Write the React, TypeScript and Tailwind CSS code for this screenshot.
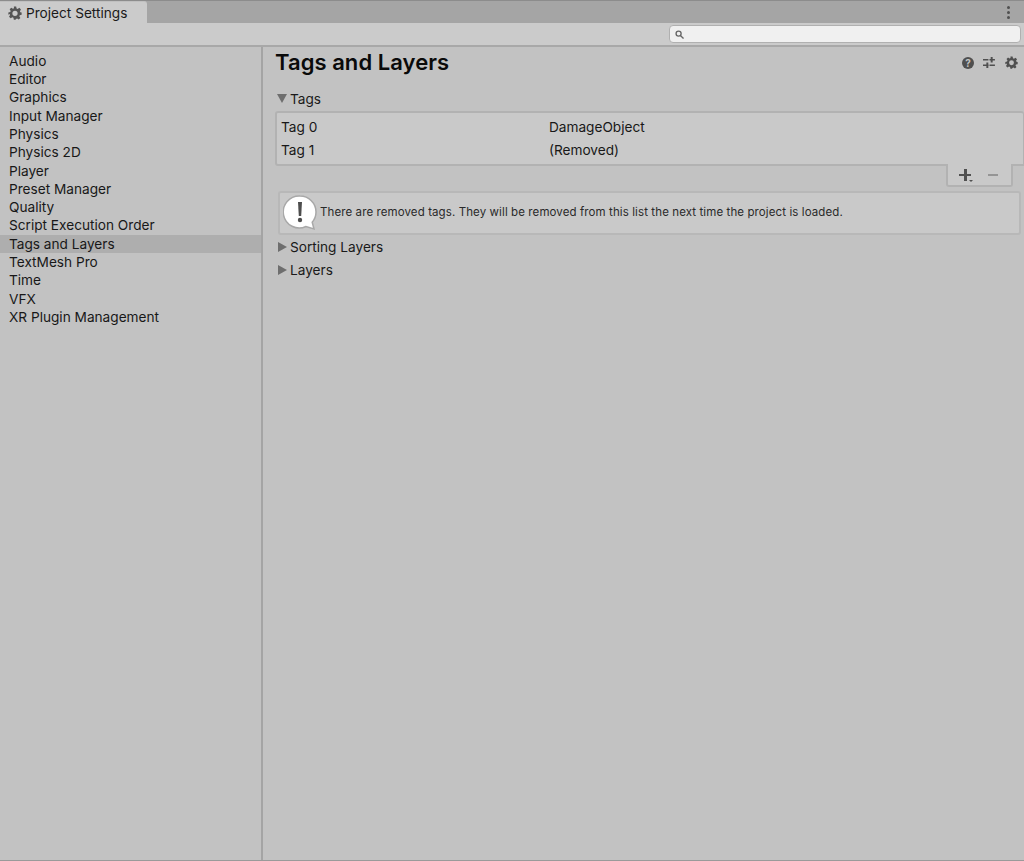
const items = [
  "Audio",
  "Editor",
  "Graphics",
  "Input Manager",
  "Physics",
  "Physics 2D",
  "Player",
  "Preset Manager",
  "Quality",
  "Script Execution Order",
  "Tags and Layers",
  "TextMesh Pro",
  "Time",
  "VFX",
  "XR Plugin Management",
];

function Gear({ className }: { className: string }) {
  return (
    <svg viewBox="0 0 24 24" className={className} fill="currentColor">
      <path
        fillRule="evenodd"
        d="M10 1h4l.7 3.2 1.9.8 2.8-1.8 2.8 2.8-1.8 2.8.8 1.9L23.4 11v4l-3.2.7-.8 1.9 1.8 2.8-2.8 2.8-2.8-1.8-1.9.8L13 23.4h-3l-.7-3.2-1.9-.8-2.8 1.8-2.8-2.8 1.8-2.8-.8-1.9L.6 15v-4l3.2-.7.8-1.9L2.8 5.6l2.8-2.8 2.8 1.8 1.9-.8L10 1zm2 7a4.5 4.5 0 1 0 0 9 4.5 4.5 0 0 0 0-9z"
      />
    </svg>
  );
}

function Arrow({ open }: { open?: boolean }) {
  return (
    <svg viewBox="0 0 10 10" className="w-[10px] h-[10px] text-[#6e6e6e]" fill="currentColor">
      {open ? <path d="M0 1h10L5 10z" /> : <path d="M0 0l9 5-9 5z" />}
    </svg>
  );
}

export default function App() {
  return (
    <div
      className="w-[1024px] h-[861px] flex flex-col overflow-hidden bg-[#c2c2c2] text-[#181818] text-[13.65px] border-b border-[#9a9a9a]"
      style={{ fontFamily: "Inter, 'Liberation Sans', sans-serif" }}
    >
      {/* Tab strip */}
      <div className="h-[23px] shrink-0 flex bg-[#a5a5a5] border-t border-[#8c8c8c]">
        <div className="w-[147px] h-[22px] bg-[#cbcbcb] rounded-tr-[3px] flex items-center pl-[8px] gap-[4px] border-t border-[#c0c0c0]">
          <Gear className="w-[14px] h-[14px] text-[#555555]" />
          <span className="text-[#1a1a1a] pt-[2px]">Project Settings</span>
        </div>
        <div className="flex-1 flex justify-end items-center pr-[14px]">
          <div className="flex flex-col gap-[2px]">
            <span className="w-[3px] h-[3px] rounded-full bg-[#505050]" />
            <span className="w-[3px] h-[3px] rounded-full bg-[#505050]" />
            <span className="w-[3px] h-[3px] rounded-full bg-[#505050]" />
          </div>
        </div>
      </div>

      {/* Search toolbar */}
      <div className="h-[24px] shrink-0 bg-[#cbcbcb] border-b-2 border-[#a8a8a8] flex items-center justify-end pr-[3px]">
        <div className="w-[352px] h-[18px] bg-[#f0f0f0] border border-[#b0b0b0] rounded-[4px] flex items-center pl-[5px]">
          <svg viewBox="0 0 10 10" className="w-[9px] h-[9px] text-[#666666]" fill="none" stroke="currentColor" strokeWidth="1.5">
            <circle cx="4" cy="4" r="2.8" />
            <path d="M6 6l3.5 3.5" />
          </svg>
        </div>
      </div>

      <div className="flex-1 flex min-h-0">
        {/* Sidebar */}
        <div className="w-[263px] shrink-0 border-r-2 border-[#a4a4a4] pt-[5px]">
          {items.map((item) => (
            <div
              key={item}
              className={`h-[18.3px] pl-[9px] pt-[1px] flex items-center leading-none ${
                item === "Tags and Layers" ? "bg-[#aeaeae]" : ""
              }`}
            >
              {item}
            </div>
          ))}
        </div>

        {/* Content */}
        <div className="flex-1 min-w-0 pl-[12px] pt-[2px]">
          <div className="h-[26px] flex items-center justify-between">
            <h1 className="text-[22px] font-semibold leading-none text-[#0a0a0a] tracking-[0.05px]">Tags and Layers</h1>
            <div className="flex items-center gap-[9px] pr-[6px] text-[#4f4f4f] mt-[1px]">
              <span className="w-[12px] h-[12px] rounded-full bg-[#4f4f4f] text-[#c2c2c2] text-[10px] font-bold leading-none flex items-center justify-center">
                ?
              </span>
              <svg viewBox="0 0 12 12" className="w-[13px] h-[13px]" stroke="currentColor" strokeWidth="1.4" fill="none">
                <path d="M0 3.5h12M0 8.5h12" strokeDasharray="5 1" />
                <path d="M8 1v5M4 6v5" strokeWidth="1.8" />
              </svg>
              <Gear className="w-[13px] h-[13px]" />
            </div>
          </div>

          <div className="mt-[14px] h-[18px] flex items-center pl-[2px] gap-[3px] text-[#1a1a1a]">
            <Arrow open />
            <span className="pt-[2px]">Tags</span>
          </div>

          {/* Tag list */}
          <div className="mt-[4px] h-[55px] border-2 border-[#b2b2b2] rounded-tl-[3px] rounded-tr-[3px] rounded-bl-[3px] bg-[#c9c9c9] pl-[4px] pt-[3px] border-r">
            <div className="h-[23px] flex items-center">
              <span className="w-[268px]">Tag 0</span>
              <span>DamageObject</span>
            </div>
            <div className="h-[23px] flex items-center">
              <span className="w-[268px]">Tag 1</span>
              <span>(Removed)</span>
            </div>
          </div>

          {/* Add and remove footer */}
          <div className="flex justify-end pr-[11px] -mt-[2px]">
            <div className="relative w-[67px] h-[23px] bg-[#c9c9c9] border-2 border-t-0 border-[#b2b2b2] rounded-b-[3px] flex items-center pl-[11px] pt-[1px] gap-[16px]">
              <span className="relative w-[13px] h-[13px]">
                <span className="absolute left-0 top-[5px] w-[12px] h-[2.5px] bg-[#505050]" />
                <span className="absolute left-[5px] top-0 w-[2.5px] h-[12px] bg-[#505050]" />
                <span className="absolute left-[10px] top-[11px] w-0 h-0 border-x-[2px] border-t-[2px] border-x-transparent border-t-[#505050]" />
              </span>
              <span className="w-[10px] h-[2px] bg-[#959595]" />
            </div>
          </div>

          {/* Help box */}
          <div className="mt-[4px] ml-[3px] mr-[3px] h-[44px] bg-[#c9c9c9] border-2 border-[#b8b8b8] rounded-[3px] flex items-center pl-[3px] gap-[3px]">
            <svg viewBox="0 0 34 36" className="w-[34px] h-[36px] shrink-0">
              <path
                d="M17 1a16 16 0 0 1 16 16c0 4-1.500 7.500-3.800 10.300L31 34l-8-2.500A16 16 0 1 1 17 1z"
                fill="#ffffff"
                stroke="#a8a8a8"
                strokeWidth="1.5"
              />
              <path d="M15 7h4l-.8 14h-2.400z" fill="#4d4d4d" />
              <circle cx="17" cy="25" r="2.200" fill="#4d4d4d" />
            </svg>
            <span className="text-[11.5px] text-[#2a2a2a] tracking-[0.1px] whitespace-nowrap">
              There are removed tags. They will be removed from this list the next time the project is loaded.
            </span>
          </div>

          <div className="h-[23px] flex items-center pl-[3px] gap-[2px]">
            <Arrow />
            <span className="text-[#1a1a1a] pt-[2px]">Sorting Layers</span>
          </div>
          <div className="h-[23px] flex items-center pl-[3px] gap-[2px]">
            <Arrow />
            <span className="text-[#1a1a1a] pt-[2px]">Layers</span>
          </div>
        </div>
      </div>
    </div>
  );
}
